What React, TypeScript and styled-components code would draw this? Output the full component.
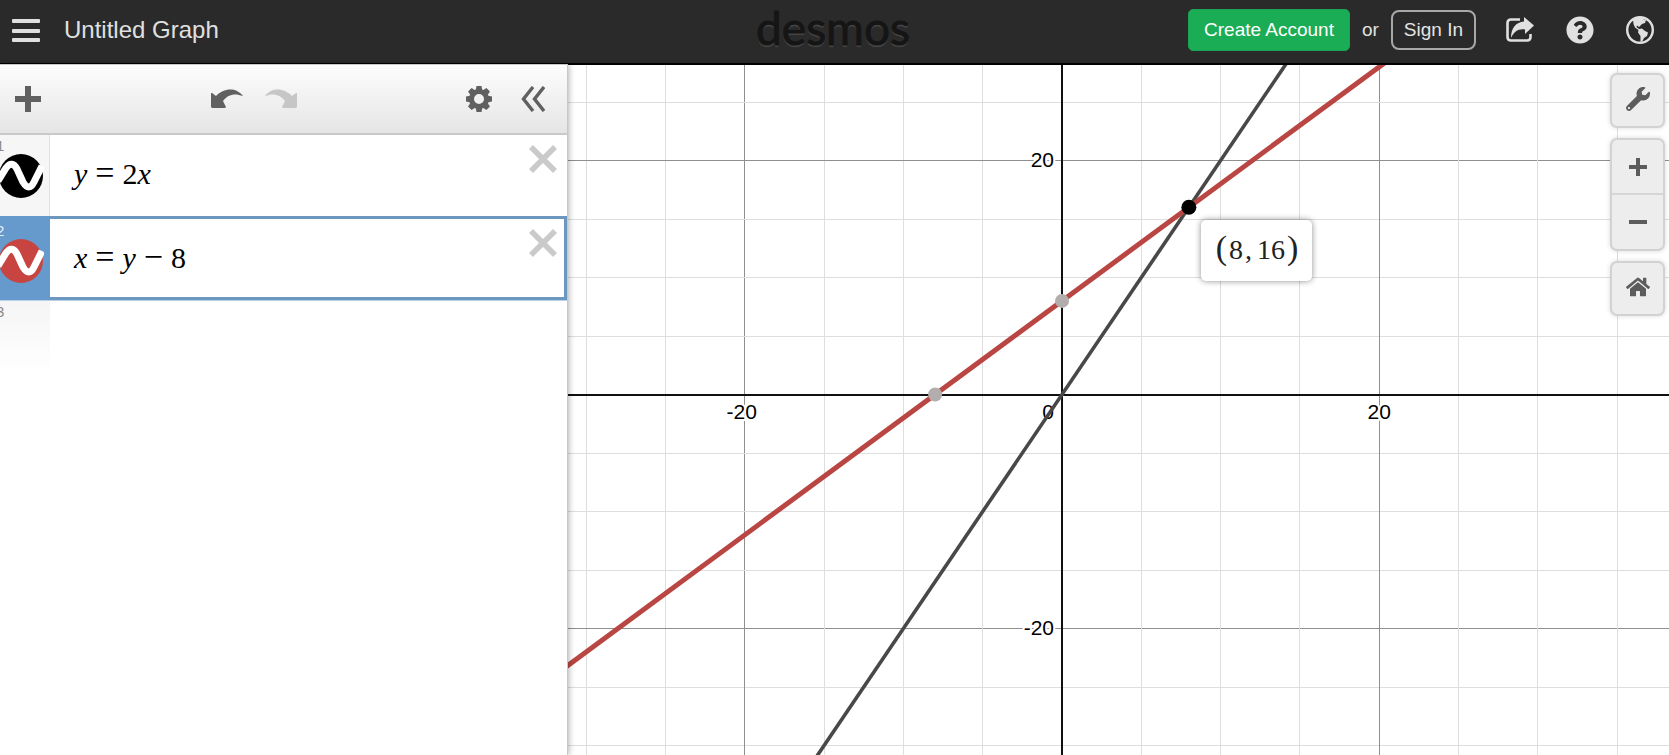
import React from "react";
import styled, { createGlobalStyle } from "styled-components";
import { FaHome, FaQuestionCircle, FaWrench } from "react-icons/fa";

const GlobalStyle = createGlobalStyle`
  *, *::before, *::after { box-sizing: border-box; }
  body { margin: 0; background: #fff; font-family: "Liberation Sans", Arial, sans-serif; }
  button { font: inherit; color: inherit; background: none; border: 0; padding: 0; cursor: pointer; }
  svg { display: block; }
`;

const Page = styled.div`
  display: flex;
  flex-direction: column;
  height: 100vh;
  overflow: hidden;
`;

const Header = styled.header`
  display: grid;
  grid-template-columns: 1fr auto 1fr;
  align-items: center;
  height: 65px;
  flex: none;
  padding: 0 15px 4px 12px;
  background: #2a2a2a;
  border-bottom: 2px solid #000;
  color: #e0e0e0;
`;

const HeaderLeft = styled.div`
  display: flex;
  align-items: center;
  gap: 24px;
`;

const HeaderRight = styled.div`
  display: flex;
  align-items: center;
  justify-content: flex-end;
  font-size: 19px;
`;

const Title = styled.h1`
  margin: 0;
  font-size: 24px;
  font-weight: 400;
  line-height: 28px;
`;

const Logo = styled.a`
  padding-bottom: 3px;
  color: #151515;
  font-family: Lato, sans-serif;
  font-size: 46px;
  line-height: 54px;
  text-decoration: none;
  -webkit-text-stroke: 1px #151515;
  text-shadow: 0 2px 1px #484848;
`;

const AccountButton = styled.button<{ $primary?: boolean }>`
  height: ${(p) => (p.$primary ? 42 : 40)}px;
  padding: 0 ${(p) => (p.$primary ? 15 : 11)}px;
  border: ${(p) => (p.$primary ? "1px solid #18a450" : "2px solid #a8a8a8")};
  border-radius: ${(p) => (p.$primary ? 5 : 8)}px;
  background: ${(p) => (p.$primary ? "#1bad55" : "transparent")};
  color: ${(p) => (p.$primary ? "#fff" : "#e4e4e4")};
  white-space: nowrap;
`;

const Or = styled.span`
  padding: 0 12px;
`;

const HeaderIcons = styled.nav`
  display: flex;
  gap: 32px;
  margin-left: 30px;
`;

const IconButton = styled.button<{ $muted?: boolean }>`
  display: flex;
  color: ${(p) => (p.$muted ? "#c6c6c6" : "inherit")};
`;

const Main = styled.main`
  display: flex;
  flex: 1;
  min-height: 0;
`;

const Panel = styled.section`
  position: relative;
  z-index: 1;
  flex: none;
  width: 34%;
  min-width: 360px;
  margin-right: 1px;
  background: #fff;
  box-shadow: 0 0 0 1px #c8c8c8, 2px 0 6px rgba(0, 0, 0, 0.3);
`;

const Toolbar = styled.div`
  display: flex;
  align-items: center;
  justify-content: space-between;
  height: 70px;
  padding: 0 22px 0 15px;
  background: linear-gradient(#fdfdfd, #e5e5e5);
  border-bottom: 2px solid #c9c9c9;
  color: #606060;
`;

const ToolGroup = styled.div<{ $gap: number }>`
  display: flex;
  align-items: center;
  gap: ${(p) => p.$gap}px;
`;

const List = styled.ol`
  list-style: none;
  margin: 0;
  padding: 0;
`;

const Row = styled.li<{ $active?: boolean }>`
  display: flex;
  height: ${(p) => (p.$active ? 85 : 81)}px;
  overflow: hidden;
  border-bottom: ${(p) => (p.$active ? "1px solid #b9d0e6" : "0")};
`;

const Gutter = styled.div<{ $tone: "plain" | "active" | "fade" }>`
  display: flex;
  flex-direction: column;
  flex: none;
  width: 50px;
  padding-top: ${(p) => (p.$tone === "active" ? 6 : 2)}px;
  border-right: ${(p) => (p.$tone === "plain" ? "1px solid #e2e2e2" : "0")};
  color: ${(p) => (p.$tone === "active" ? "#e6eff8" : "#8a8a8a")};
  background: ${(p) =>
    p.$tone === "active"
      ? "#6699cc"
      : p.$tone === "plain"
      ? "#f6f6f6"
      : "linear-gradient(#f5f5f5, #ffffff 74px)"};
`;

const RowNumber = styled.span`
  margin-left: -4px;
  font-size: 15px;
  line-height: 17px;
`;

const Cell = styled.div<{ $active?: boolean }>`
  display: flex;
  flex: 1;
  align-items: flex-start;
  justify-content: space-between;
  padding: 10px ${(p) => (p.$active ? 7 : 10)}px 0 24px;
  border: ${(p) => (p.$active ? "3px solid #6c98c0" : "0")};
  border-left-width: 0;
`;

const Expression = styled.div`
  display: flex;
  align-items: baseline;
  padding-top: 10px;
  color: #000;
  font-family: "Liberation Serif", "Times New Roman", serif;
  font-size: 30px;
  line-height: 36px;
`;

const Var = styled.i`
  font-style: italic;
`;

const Op = styled.span`
  padding: 0 8px;
  font-size: 34px;
`;

const GraphArea = styled.section`
  position: relative;
  flex: 1;
  min-width: 0;
  background: #fff;
`;

const Plot = styled.svg`
  width: 100%;
  height: 100%;
  font-size: 21px;
`;

const AxisLabel = styled.text`
  fill: #000;
  stroke: #fff;
  stroke-width: 4px;
  stroke-linejoin: round;
  paint-order: stroke;
`;

const Tooltip = styled.div`
  position: absolute;
  left: 633px;
  top: 155px;
  display: flex;
  align-items: baseline;
  justify-content: center;
  width: 111px;
  height: 61px;
  padding-top: 10px;
  border-radius: 5px;
  background: #fff;
  box-shadow: 0 0 6px rgba(0, 0, 0, 0.45);
  color: #222;
  font-family: "Liberation Serif", "Times New Roman", serif;
  font-size: 28px;
  line-height: 36px;
`;

const Paren = styled.span`
  padding: 0 2px;
  font-size: 34px;
`;

const Comma = styled.span`
  padding: 0 5px 0 2px;
`;

const Controls = styled.div`
  position: absolute;
  top: 8px;
  right: 4px;
  display: flex;
  flex-direction: column;
  gap: 10px;
`;

const ControlGroup = styled.div`
  display: flex;
  flex-direction: column;
  width: 55px;
  border: 2px solid #d2d2d2;
  border-radius: 7px;
  background: #ededed;
  box-shadow: 0 0 5px rgba(0, 0, 0, 0.15);
  color: #5c5c5c;
`;

const ControlButton = styled.button`
  display: flex;
  align-items: center;
  justify-content: center;
  height: 51px;
  padding-bottom: 3px;
  &:not(:only-child) {
    height: 53px;
    padding-bottom: 0;
  }
  & + & {
    border-top: 2px solid #d6d6d6;
  }
  & + &:not(:only-child) {
    height: 56px;
  }
`;

const MenuIcon = () => (
  <svg width="28" height="24" viewBox="0 0 28 24" fill="currentColor">
    <rect y="1" width="28" height="4" rx="1" />
    <rect y="11" width="28" height="4" rx="1" />
    <rect y="20" width="28" height="4" rx="1" />
  </svg>
);

const ShareIcon = () => (
  <svg width="28" height="28" viewBox="0 0 28 28">
    <path d="M14 3.500H5Q1.500 3.500 1.500 7V21Q1.500 24.500 5 24.500H21Q24.500 24.500 24.500 21V18" fill="none" stroke="currentColor" strokeWidth="2.600" />
    <path d="M18 1L28 9.500L19 18V13.500C12 12.500 8 16 5 22C5 12 10 6 18 5.500Z" fill="currentColor" />
  </svg>
);

const GlobeIcon = () => (
  <svg width="28" height="28" viewBox="0 0 28 28">
    <circle cx="14" cy="14" r="12.800" fill="none" stroke="currentColor" strokeWidth="2.400" />
    <path
      fill="currentColor"
      d="M7 3L12 1H19L17 3L20 4L19 7L16 8L13 11L11 9.500L10.500 11L13 13L16 12.500L19 15L22 16.500L21 20L18 22L16 26L14.500 25.500L14.500 20L12 16.500L12.500 14L9 11.500L7.500 8Z"
    />
  </svg>
);

const PlusIcon = ({ size, weight }: { size: number; weight: number }) => (
  <svg width={size} height={size} viewBox={`0 0 ${size} ${size}`} stroke="currentColor" strokeWidth={weight}>
    <path d={`M0 ${size / 2}H${size}M${size / 2} 0V${size}`} />
  </svg>
);

const MinusIcon = () => (
  <svg width="18" height="18" viewBox="0 0 18 18" fill="currentColor">
    <rect y="7" width="18" height="4" />
  </svg>
);

const ArrowIcon = ({ forward }: { forward?: boolean }) => (
  <svg width="32" height="20" viewBox="0 0 32 20" fill="currentColor">
    <path
      transform={forward ? "translate(32 0) scale(-1 1)" : undefined}
      d="M0 4L1 4L5 7C12 0 24 -3 32 7C24 4 17 5 12 12L15 18L14 19H1L0 18Z"
    />
  </svg>
);

const teeth = [0, 45, 90, 135, 180, 225, 270, 315];

const GearIcon = () => (
  <svg width="26" height="26" viewBox="0 0 26 26">
    <circle cx="13" cy="13" r="7.500" fill="none" stroke="currentColor" strokeWidth="5" />
    {teeth.map((angle) => (
      <path key={angle} d="M9.500 5L10.500 0H15.500L16.500 5Z" fill="currentColor" transform={`rotate(${angle} 13 13)`} />
    ))}
  </svg>
);

const CollapseIcon = () => (
  <svg width="24" height="26" viewBox="0 0 24 26" fill="none" stroke="currentColor" strokeWidth="3.400">
    <path d="M12 1L2.500 13L12 25M23 1L13.500 13L23 25" />
  </svg>
);

const CloseIcon = () => (
  <svg width="28" height="28" viewBox="0 0 28 28" stroke="#cacaca" strokeWidth="5.600">
    <path d="M2 2L26 26M26 2L2 26" />
  </svg>
);

const WaveIcon = ({ color }: { color: string }) => (
  <svg width="44" height="44" viewBox="0 0 44 44">
    <circle cx="21" cy="22" r="22" fill={color} />
    <path
      d="M-2 27L6 14Q12 6 17 15L23 28Q29 38 34 28L42 12"
      fill="none"
      stroke="#fff"
      strokeWidth="7"
    />
  </svg>
);

const ORIGIN = { x: 494, y: 329.5 };
const UNIT = { x: 15.86, y: 11.7 };
const px = (x: number) => ORIGIN.x + x * UNIT.x;
const py = (y: number) => ORIGIN.y - y * UNIT.y;
const steps = Array.from({ length: 61 }, (_, i) => (i - 30) * 5).filter((v) => v !== 0);
const lineColor = (v: number) => (v % 20 === 0 ? "#8f8f8f" : "#dedede");

const Graph = () => (
  <Plot role="img" aria-label="Graph of y = 2x and x = y - 8">
    <g shapeRendering="crispEdges">
      {steps.map((v) => (
        <React.Fragment key={v}>
          <line x1={px(v)} x2={px(v)} y1={py(150)} y2={py(-150)} stroke={lineColor(v)} />
          <line x1={px(-150)} x2={px(150)} y1={py(v)} y2={py(v)} stroke={lineColor(v)} />
        </React.Fragment>
      ))}
      <path
        d={`M${px(0)} ${py(150)}V${py(-150)}M${px(-150)} ${py(0)}H${px(150)}`}
        stroke="#111"
        strokeWidth="2"
      />
    </g>
    <AxisLabel x={px(-20) - 3} y={py(0) + 24} textAnchor="middle">-20</AxisLabel>
    <AxisLabel x={px(20)} y={py(0) + 24} textAnchor="middle">20</AxisLabel>
    <AxisLabel x={px(0) - 8} y={py(0) + 24} textAnchor="end">0</AxisLabel>
    <AxisLabel x={px(0) - 8} y={py(20) + 6} textAnchor="end">20</AxisLabel>
    <AxisLabel x={px(0) - 8} y={py(-20) + 6} textAnchor="end">-20</AxisLabel>
    <line x1={px(-70)} y1={py(-140)} x2={px(70)} y2={py(140)} stroke="#484848" strokeWidth="3.600" />
    <line x1={px(-100)} y1={py(-92)} x2={px(100)} y2={py(108)} stroke="#b94643" strokeWidth="5" />
    <circle cx={px(-8)} cy={py(0)} r="7" fill="#b3adad" />
    <circle cx={px(0)} cy={py(8)} r="7" fill="#b3adad" />
    <circle cx={px(8)} cy={py(16)} r="7.500" fill="#000" />
  </Plot>
);

export default function App() {
  return (
    <Page>
      <GlobalStyle />
      <Header>
        <HeaderLeft>
          <IconButton aria-label="Open menu"><MenuIcon /></IconButton>
          <Title>Untitled Graph</Title>
        </HeaderLeft>
        <Logo href="#">desmos</Logo>
        <HeaderRight>
          <AccountButton $primary>Create Account</AccountButton>
          <Or>or</Or>
          <AccountButton>Sign In</AccountButton>
          <HeaderIcons>
            <IconButton aria-label="Share"><ShareIcon /></IconButton>
            <IconButton aria-label="Help"><FaQuestionCircle size={28} /></IconButton>
            <IconButton aria-label="Language"><GlobeIcon /></IconButton>
          </HeaderIcons>
        </HeaderRight>
      </Header>
      <Main>
        <Panel>
          <Toolbar>
            <ToolGroup $gap={0}>
              <IconButton aria-label="Add item"><PlusIcon size={26} weight={6} /></IconButton>
            </ToolGroup>
            <ToolGroup $gap={22}>
              <IconButton aria-label="Undo"><ArrowIcon /></IconButton>
              <IconButton aria-label="Redo" $muted><ArrowIcon forward /></IconButton>
            </ToolGroup>
            <ToolGroup $gap={29}>
              <IconButton aria-label="Edit list"><GearIcon /></IconButton>
              <IconButton aria-label="Hide list"><CollapseIcon /></IconButton>
            </ToolGroup>
          </Toolbar>
          <List>
            <Row>
              <Gutter $tone="plain">
                <RowNumber>1</RowNumber>
                <IconButton aria-label="Hide expression 1"><WaveIcon color="#000" /></IconButton>
              </Gutter>
              <Cell>
                <Expression role="textbox" aria-label="Expression 1" tabIndex={0}>
                  <Var>y</Var><Op>=</Op>2<Var>x</Var>
                </Expression>
                <IconButton aria-label="Delete expression 1"><CloseIcon /></IconButton>
              </Cell>
            </Row>
            <Row $active>
              <Gutter $tone="active">
                <RowNumber>2</RowNumber>
                <IconButton aria-label="Hide expression 2"><WaveIcon color="#c74440" /></IconButton>
              </Gutter>
              <Cell $active>
                <Expression role="textbox" aria-label="Expression 2" tabIndex={0}>
                  <Var>x</Var><Op>=</Op><Var>y</Var><Op>−</Op>8
                </Expression>
                <IconButton aria-label="Delete expression 2"><CloseIcon /></IconButton>
              </Cell>
            </Row>
            <Row>
              <Gutter $tone="fade"><RowNumber>3</RowNumber></Gutter>
            </Row>
          </List>
        </Panel>
        <GraphArea>
          <Graph />
          <Tooltip>
            <Paren>(</Paren>8<Comma>,</Comma>16<Paren>)</Paren>
          </Tooltip>
          <Controls>
            <ControlGroup>
              <ControlButton aria-label="Graph settings"><FaWrench size={24} /></ControlButton>
            </ControlGroup>
            <ControlGroup>
              <ControlButton aria-label="Zoom in"><PlusIcon size={18} weight={4} /></ControlButton>
              <ControlButton aria-label="Zoom out"><MinusIcon /></ControlButton>
            </ControlGroup>
            <ControlGroup>
              <ControlButton aria-label="Default view"><FaHome size={24} /></ControlButton>
            </ControlGroup>
          </Controls>
        </GraphArea>
      </Main>
    </Page>
  );
}
